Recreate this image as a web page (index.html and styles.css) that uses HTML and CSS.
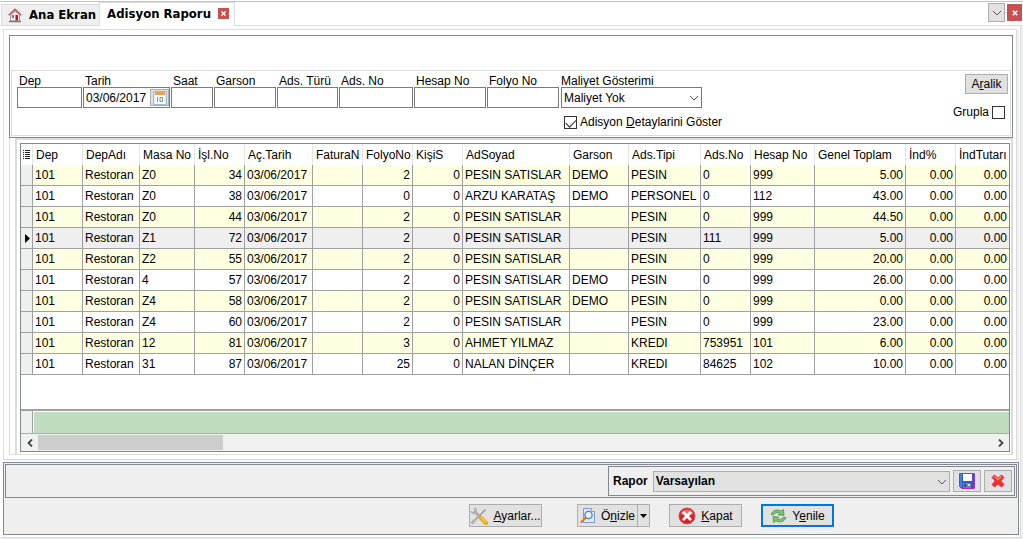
FILE: index.html
```html
<!DOCTYPE html>
<html lang="tr">
<head>
    <meta charset="UTF-8" />
    <meta name="viewport" content="width=device-width, initial-scale=1" />
    <title>Adisyon Raporu</title>
    <link rel="stylesheet" href="styles.css">
</head>
<body>
<nav class="tabs">
    <a href="#home" class="tab">
        <svg class="home-icon" width="14" height="15" viewBox="0 0 14 15">
            <path d="M2.5 7v6h9V7L7 3z" fill="#f4eeee" stroke="#a09a9a"/>
            <path d="M.8 7.2 7 1.2l6.2 6" fill="none" stroke="#c9504a" stroke-width="1.5"/>
            <rect x="4" y="7" width="2" height="3" fill="#8d6a6a"/>
            <rect x="7.500" y="7" width="2.500" height="5.500" fill="#b3131b"/>
            <path d="M1 13.500h12" stroke="#777" stroke-width="1.500"/>
        </svg>
        Ana Ekran
    </a>
    <div class="tab active">
        Adisyon Raporu
        <button class="close" type="button" aria-label="Sekmeyi kapat">
            <svg width="5" height="5" viewBox="0 0 5 5"><path d="M.5.5l4 4M4.500.5l-4 4" stroke="#fff" stroke-width="1.400"/></svg>
        </button>
    </div>
    <div class="window-buttons">
        <button class="tab-list" type="button" aria-label="Sekmeler">
            <svg width="10" height="6" viewBox="0 0 10 6"><path d="M1 1l4 4 4-4" fill="none" stroke="#555"/></svg>
        </button>
        <button class="close-all" type="button" aria-label="Kapat">
            <svg width="6" height="6" viewBox="0 0 6 6"><path d="M.8.8l4.400 4.400M5.200.8L.8 5.200" stroke="#fff" stroke-width="1.600"/></svg>
        </button>
    </div>
</nav>

<main class="workspace">
    <section class="report">
        <form class="filter">
            <div class="filter-box">
                <div class="fields">
                    <div class="field w-dep"><label for="dep">Dep</label><input type="text" id="dep"></div>
                    <div class="field w-date">
                        <label for="tarih">Tarih</label>
                        <div class="date-box">
                            <input type="text" id="tarih" value="03/06/2017">
                            <button type="button" aria-label="Takvim">
                                <svg width="14" height="14" viewBox="0 0 14 14">
                                    <rect x=".5" y=".5" width="13" height="13" fill="#dcebf8" stroke="#9dbbe0"/>
                                    <rect x="2" y="2" width="10" height="11" fill="#fff"/>
                                    <rect x="2" y="1" width="10" height="3" fill="#e8a04c"/>
                                    <path d="M4.500 6v5M7 6.500h2.500v4H7z" fill="none" stroke="#6fa56f"/>
                                </svg>
                            </button>
                        </div>
                    </div>
                    <div class="field w-time"><label for="saat">Saat</label><input type="text" id="saat"></div>
                    <div class="field w-waiter"><label for="garson">Garson</label><input type="text" id="garson"></div>
                    <div class="field w-type"><label for="tur">Ads. Türü</label><input type="text" id="tur"></div>
                    <div class="field w-no"><label for="adsno">Ads. No</label><input type="text" id="adsno"></div>
                    <div class="field w-acc"><label for="hesap">Hesap No</label><input type="text" id="hesap"></div>
                    <div class="field w-acc"><label for="folyo">Folyo No</label><input type="text" id="folyo"></div>
                    <div class="field w-cost">
                        <label for="maliyet">Maliyet Gösterimi</label>
                        <div class="select">
                            <select id="maliyet"><option>Maliyet Yok</option></select>
                            <svg width="10" height="6" viewBox="0 0 10 6"><path d="M1 1l4 4 4-4" fill="none" stroke="#555"/></svg>
                        </div>
                        <label class="check"><input type="checkbox" checked><span>Adisyon <u>D</u>etaylarini Göster</span></label>
                    </div>
                </div>
                <div class="filter-side">
                    <button type="button" class="btn range"><span>A<u>r</u>alik</span></button>
                    <label class="check">Grupla<input type="checkbox"></label>
                </div>
            </div>
        </form>

        <div class="grid-area">
            <div class="grid-frame">
                <div class="grid">
                    <div class="rows">
                        <table>
                            <colgroup>
                                <col class="c12"><col class="c50"><col class="c57"><col class="c55"><col class="c50"><col class="c68">
                                <col class="c50"><col class="c50"><col class="c50"><col class="c107"><col class="c59"><col class="c72">
                                <col class="c50"><col class="c64"><col class="c91"><col class="c50"><col>
                            </colgroup>
                            <thead>
                            <tr>
                                <th class="mark">
                                    <svg width="7" height="9" viewBox="0 0 7 9"><path d="M0 .5h1M2 .5h5M0 2.500h1M2 2.500h5M0 4.500h1M2 4.500h5M0 6.500h1M2 6.500h5M0 8.500h1M2 8.500h5" stroke="#222"/></svg>
                                </th>
                                <th>Dep</th><th>DepAdı</th><th>Masa No</th><th>İşl.No</th><th>Aç.Tarih</th><th>FaturaN</th><th>FolyoNo</th><th>KişiS</th>
                                <th>AdSoyad</th><th>Garson</th><th>Ads.Tipi</th><th>Ads.No</th><th>Hesap No</th><th>Genel Toplam</th><th>İnd%</th><th>İndTutarı</th>
                            </tr>
                            </thead>
                            <tbody>
                            <tr><td class="mark"></td><td>101</td><td>Restoran</td><td>Z0</td><td class="num">34</td><td>03/06/2017</td><td></td><td class="num">2</td><td class="num">0</td><td>PESIN SATISLAR</td><td>DEMO</td><td>PESIN</td><td>0</td><td>999</td><td class="num">5.00</td><td class="num">0.00</td><td class="num">0.00</td></tr>
                            <tr><td class="mark"></td><td>101</td><td>Restoran</td><td>Z0</td><td class="num">38</td><td>03/06/2017</td><td></td><td class="num">0</td><td class="num">0</td><td>ARZU KARATAŞ</td><td>DEMO</td><td>PERSONEL</td><td>0</td><td>112</td><td class="num">43.00</td><td class="num">0.00</td><td class="num">0.00</td></tr>
                            <tr><td class="mark"></td><td>101</td><td>Restoran</td><td>Z0</td><td class="num">44</td><td>03/06/2017</td><td></td><td class="num">2</td><td class="num">0</td><td>PESIN SATISLAR</td><td></td><td>PESIN</td><td>0</td><td>999</td><td class="num">44.50</td><td class="num">0.00</td><td class="num">0.00</td></tr>
                            <tr class="current"><td class="mark"><svg width="5" height="9" viewBox="0 0 5 9"><path d="M0 0l5 4.500L0 9z"/></svg></td><td>101</td><td>Restoran</td><td>Z1</td><td class="num">72</td><td>03/06/2017</td><td></td><td class="num">2</td><td class="num">0</td><td>PESIN SATISLAR</td><td></td><td>PESIN</td><td>111</td><td>999</td><td class="num">5.00</td><td class="num">0.00</td><td class="num">0.00</td></tr>
                            <tr><td class="mark"></td><td>101</td><td>Restoran</td><td>Z2</td><td class="num">55</td><td>03/06/2017</td><td></td><td class="num">2</td><td class="num">0</td><td>PESIN SATISLAR</td><td></td><td>PESIN</td><td>0</td><td>999</td><td class="num">20.00</td><td class="num">0.00</td><td class="num">0.00</td></tr>
                            <tr><td class="mark"></td><td>101</td><td>Restoran</td><td>4</td><td class="num">57</td><td>03/06/2017</td><td></td><td class="num">2</td><td class="num">0</td><td>PESIN SATISLAR</td><td>DEMO</td><td>PESIN</td><td>0</td><td>999</td><td class="num">26.00</td><td class="num">0.00</td><td class="num">0.00</td></tr>
                            <tr><td class="mark"></td><td>101</td><td>Restoran</td><td>Z4</td><td class="num">58</td><td>03/06/2017</td><td></td><td class="num">2</td><td class="num">0</td><td>PESIN SATISLAR</td><td>DEMO</td><td>PESIN</td><td>0</td><td>999</td><td class="num">0.00</td><td class="num">0.00</td><td class="num">0.00</td></tr>
                            <tr><td class="mark"></td><td>101</td><td>Restoran</td><td>Z4</td><td class="num">60</td><td>03/06/2017</td><td></td><td class="num">2</td><td class="num">0</td><td>PESIN SATISLAR</td><td></td><td>PESIN</td><td>0</td><td>999</td><td class="num">23.00</td><td class="num">0.00</td><td class="num">0.00</td></tr>
                            <tr><td class="mark"></td><td>101</td><td>Restoran</td><td>12</td><td class="num">81</td><td>03/06/2017</td><td></td><td class="num">3</td><td class="num">0</td><td>AHMET YILMAZ</td><td></td><td>KREDI</td><td>753951</td><td>101</td><td class="num">6.00</td><td class="num">0.00</td><td class="num">0.00</td></tr>
                            <tr><td class="mark"></td><td>101</td><td>Restoran</td><td>31</td><td class="num">87</td><td>03/06/2017</td><td></td><td class="num">25</td><td class="num">0</td><td>NALAN DİNÇER</td><td></td><td>KREDI</td><td>84625</td><td>102</td><td class="num">10.00</td><td class="num">0.00</td><td class="num">0.00</td></tr>
                            </tbody>
                        </table>
                    </div>
                    <div class="summary"><div class="summary-mark"></div><div class="summary-cells"></div></div>
                    <div class="scrollbar">
                        <button type="button" aria-label="Sola"><svg width="6" height="8" viewBox="0 0 6 8"><path d="M5 .5L1.500 4 5 7.500" fill="none" stroke="#444" stroke-width="1.800"/></svg></button>
                        <div class="track"><div class="thumb"></div></div>
                        <button type="button" aria-label="Sağa"><svg width="6" height="8" viewBox="0 0 6 8"><path d="M1 .5L4.500 4 1 7.500" fill="none" stroke="#444" stroke-width="1.800"/></svg></button>
                    </div>
                </div>
            </div>
        </div>
    </section>

    <footer class="bottom">
        <div class="template-bar">
            <div class="template">
                <label for="rapor">Rapor</label>
                <div class="select">
                    <select id="rapor"><option>Varsayılan</option></select>
                    <svg width="10" height="6" viewBox="0 0 10 6"><path d="M1 1l4 4 4-4" fill="none" stroke="#555"/></svg>
                </div>
                <button type="button" class="btn small" aria-label="Kaydet">
                    <svg width="16" height="16" viewBox="0 0 16 16">
                        <path d="M.5.5h15v15h-13l-2-2z" fill="#3559c0" stroke="#b02cc8"/>
                        <rect x="1" y="1" width="2" height="13" fill="#3b84d8"/>
                        <rect x="4" y="1" width="9" height="7" fill="#fff"/>
                        <rect x="4" y="10" width="8" height="5" fill="#6f7fa0"/>
                        <rect x="5" y="11" width="2" height="3" fill="#2a4fa8"/>
                        <rect x="9" y="11" width="2" height="2" fill="#d8d8cc"/>
                    </svg>
                </button>
                <button type="button" class="btn small" aria-label="Sil">
                    <svg width="14" height="14" viewBox="0 0 14 14">
                        <path d="M3.500 1L7 4l3.500-3L13 3.500 9.800 7l3.200 3.500-2.500 2.500L7 10l-3.500 3L1 10.500 4.200 7 1 3.500z" fill="#e83a10" stroke="#f0209c" stroke-linejoin="round"/>
                        <path d="M3.500 2.500L7 5.500l3.500-3" fill="none" stroke="#f58a5c" stroke-width="1.500"/>
                    </svg>
                </button>
            </div>
        </div>
        <div class="actions">
            <button type="button" class="btn">
                <svg width="18" height="18" viewBox="0 0 18 18">
                    <path d="M15.500 2.500L5 13" stroke="#9a9a9a" stroke-width="1.600"/>
                    <path d="M5 13l-3.500 3.500" stroke="#b0b0b0" stroke-width="3"/>
                    <path d="M4 4l6 6" stroke="#aaa" stroke-width="2.600"/>
                    <path d="M1 4.500A3 3 0 0 0 6 5M4.500 1A3 3 0 0 1 5 6" fill="none" stroke="#aaa" stroke-width="1.600"/>
                    <path d="M10.500 10.500l5.500 5.500" stroke="#e8a512" stroke-width="4" stroke-linecap="round"/>
                    <path d="M11 10.500l5 5" stroke="#ffd65a" stroke-width="1.200"/>
                </svg>
                <span><u>A</u>yarlar...</span>
            </button>
            <div class="split">
                <button type="button" class="btn">
                    <svg width="16" height="17" viewBox="0 0 16 17">
                        <path d="M3.500 1.500h8l3 3v11h-11z" fill="#dfe9fa" stroke="#7f9cd0"/>
                        <path d="M11.500 1.500v3h3" fill="#fff" stroke="#7f9cd0"/>
                        <circle cx="8.500" cy="8" r="3.600" fill="#eef7ff" stroke="#4d78b8" stroke-width="1.300"/>
                        <path d="M5.500 11l-4 4" stroke="#d87822" stroke-width="2.200" stroke-linecap="round"/>
                    </svg>
                    <span>Ö<u>n</u>izle</span>
                </button>
                <button type="button" class="btn drop" aria-label="Seçenekler">
                    <svg width="7" height="4" viewBox="0 0 7 4"><path d="M0 0h7L3.500 4z"/></svg>
                </button>
            </div>
            <button type="button" class="btn">
                <svg width="18" height="18" viewBox="0 0 18 18">
                    <circle cx="9" cy="9" r="8" fill="#dc1f26" stroke="#c8555a"/>
                    <path d="M2.500 7a7 7 0 0 1 13 0q-6 3-13 0z" fill="#ee6a6c"/>
                    <path d="M5.800 5.800l6.400 6.400M12.200 5.800l-6.400 6.400" stroke="#fff" stroke-width="2.800" stroke-linecap="round"/>
                </svg>
                <span><u>K</u>apat</span>
            </button>
            <button type="button" class="btn default">
                <svg width="17" height="16" viewBox="0 0 17 16">
                    <path d="M1 6.500C2.500 2 8 .8 11 3.200L13.500 1.500 14 7.500 8 6.800l1.800-1.500C8 4 4.500 4.500 3.500 7z" fill="#7dbd75" stroke="#4b9350" stroke-width=".8"/>
                    <path d="M16 9.500c-1.500 4.500-7 5.700-10 3.300L3.500 14.500 3 8.500l6 .7-1.800 1.500c1.800 1.300 5.300.8 6.300-1.700z" fill="#7dbd75" stroke="#4b9350" stroke-width=".8"/>
                </svg>
                <span>Y<u>e</u>nile</span>
            </button>
        </div>
    </footer>
</main>
</body>
</html>
```

FILE: styles.css
```css
* {
  box-sizing: border-box;
}
body {
  margin: 0;
  padding: 1px 0;
  min-height: 100vh;
  display: flex;
  flex-direction: column;
  background: #fff;
  color: #000;
  font-family: "Liberation Sans", Arial, sans-serif;
  font-size: 12px;
  line-height: 14px;
}
svg {
  display: block;
  flex: none;
}
button, input, select {
  font: inherit;
  color: inherit;
  margin: 0;
  padding: 0;
  border-radius: 0;
}
u {
  text-underline-offset: 1px;
}

/* tabs */
.tabs {
  display: flex;
  align-items: flex-end;
  height: 25px;
  padding-left: 1px;
  border-top: 1px solid #c4c4c4;
  box-shadow: inset 0 -1px 0 #dcdcdc;
  font-family: "DejaVu Sans Condensed", "DejaVu Sans", sans-serif;
  font-stretch: condensed;
  font-size: 13px;
  font-weight: bold;
}
.tab {
  display: flex;
  align-items: center;
  gap: 7px;
  height: 22px;
  padding: 0 3px 0 6px;
  background: #efefef;
  border: 1px solid #dcdcdc;
  border-right: none;
  color: #000;
  text-decoration: none;
  white-space: nowrap;
}
.tab.active {
  height: 24px;
  padding: 0 10px 2px 7px;
  background: #fff;
  border-right: 1px solid #dcdcdc;
  border-bottom: none;
}
.tab.active {
  padding-right: 5px;
}
.close, .close-all, .tab-list {
  display: flex;
  align-items: center;
  justify-content: center;
  background: #c75050;
  border: none;
}
.close {
  width: 11px;
  height: 11px;
}
.window-buttons {
  display: flex;
  gap: 2px;
  margin-left: auto;
  padding: 0 1px 4px 0;
}
.tab-list {
  width: 17px;
  height: 19px;
  background: #e1e1e1;
  border: 1px solid #adadad;
}
.close-all {
  width: 15px;
  height: 17px;
  margin-top: 1px;
}

.workspace {
  flex: 1;
  display: flex;
  flex-direction: column;
  margin-right: 2px;
  padding: 3px 1px 2px 3px;
  border-right: 1px solid #dcdcdc;
  border-bottom: 1px solid #dcdcdc;
  box-shadow: 2px 1px 0 #efefef;
}
.report {
  flex: 1;
  display: flex;
  flex-direction: column;
  margin: 0 2px 2px 0;
  padding: 5px 3px 4px 5px;
  border: 1px solid #dcdcdc;
  box-shadow: 2px 1px 0 #efefef;
}

/* filter */
.filter {
  padding: 34px 1px 1px;
  border: 1px solid #828790;
}
.filter-box {
  display: flex;
  justify-content: space-between;
  min-height: 66px;
  padding: 3px 2px 4px 5px;
  border: 1px solid #dcdcdc;
}
.fields {
  display: flex;
  gap: 1px;
}
.field > label {
  display: block;
  padding: 1px 0 0 2px;
  line-height: 12px;
  white-space: nowrap;
}
.field input[type="text"] {
  display: block;
  width: 100%;
  height: 21px;
  padding: 0 2px;
  border: 1px solid #7a7a7a;
  background: #fff;
}
.w-dep { width: 65px; }
.w-date { width: 87px; }
.w-time { width: 42px; }
.w-waiter { width: 62px; }
.w-type { width: 61px; }
.w-no { width: 74px; }
.w-acc { width: 72px; }
.w-cost {
  width: 141px;
  margin-left: 1px;
}
.w-cost > label {
  padding-left: 0;
}
.date-box {
  display: flex;
  border: 1px solid #7a7a7a;
}
.field .date-box input {
  flex: 1;
  min-width: 0;
  height: 19px;
  border: none;
}
.date-box button {
  display: flex;
  align-items: center;
  justify-content: center;
  width: 19px;
  height: 17px;
  margin: 1px 0 1px 1px;
  background: #e1e1e1;
  border: 1px solid #adadad;
}
.select {
  position: relative;
}
.select select {
  display: block;
  appearance: none;
  width: 100%;
  height: 21px;
  padding: 0 20px 0 2px;
  border: 1px solid #7a7a7a;
  background: #fff;
}
.select svg {
  position: absolute;
  right: 3px;
  top: 8px;
  pointer-events: none;
}
label.check {
  display: flex;
  align-items: center;
  gap: 3px;
  white-space: nowrap;
}
.field > label.check {
  margin-top: 7px;
  padding: 0 0 0 3px;
  line-height: 14px;
}
.check input {
  appearance: none;
  position: relative;
  flex: none;
  width: 13px;
  height: 13px;
  border: 1px solid #333;
  background: #fff;
}
.check input:checked::after {
  content: "";
  position: absolute;
  left: 1px;
  top: 2px;
  width: 9px;
  height: 5px;
  border-left: 1px solid #222;
  border-bottom: 1px solid #222;
  transform: rotate(-45deg);
}
.filter-side {
  display: flex;
  flex-direction: column;
  align-items: flex-end;
  gap: 11px;
}
.filter-side .check {
  margin-right: 3px;
}

.btn {
  display: flex;
  align-items: center;
  justify-content: center;
  gap: 5px;
  width: 73px;
  height: 23px;
  background: #e1e1e1;
  border: 1px solid #adadad;
  white-space: nowrap;
}
.btn.range {
  width: 43px;
  height: 20px;
}

/* grid */
.grid-area {
  flex: 1;
  display: flex;
  padding-left: 5px;
  border-left: 1px solid #dcdcdc;
  border-bottom: 1px solid #dcdcdc;
}
.grid-frame {
  flex: 1;
  min-width: 0;
  display: flex;
  padding: 3px 1px 2px 3px;
  border: 2px solid #dcdcdc;
  border-bottom: none;
}
.grid {
  flex: 1;
  min-width: 0;
  display: flex;
  flex-direction: column;
  border: 1px solid #828790;
}
.rows {
  flex: 1;
  min-height: 265px;
  overflow: hidden;
}
table {
  width: 100%;
  min-width: 987px;
  table-layout: fixed;
  border-collapse: separate;
  border-spacing: 0;
}
.c12 { width: 12px; }
.c50 { width: 50px; }
.c55 { width: 55px; }
.c57 { width: 57px; }
.c59 { width: 59px; }
.c64 { width: 64px; }
.c68 { width: 68px; }
.c72 { width: 72px; }
.c91 { width: 91px; }
.c107 { width: 107px; }
th, td {
  height: 21px;
  padding: 0 2px;
  overflow: hidden;
  white-space: nowrap;
  text-align: left;
  font-weight: normal;
  border-right: 1px solid #a0a0a0;
  border-bottom: 1px solid #a0a0a0;
}
th {
  padding: 0 0 0 3px;
  border-right-color: #e5e5e5;
  border-bottom: none;
}
th:last-child, td:last-child {
  border-right: none;
}
.num {
  text-align: right;
}
tbody tr:nth-child(odd) {
  background: #ffffe1;
}
tbody tr.current {
  background: #efefef;
}
td.mark {
  padding: 0 0 0 4px;
  background: #efefef;
}
th.mark {
  padding: 0 0 0 2px;
}
.summary {
  display: flex;
  height: 25px;
  border-top: 2px solid #a0a0a0;
  border-bottom: 1px solid #adadad;
}
.summary-mark {
  width: 12px;
  background: #efefef;
  border-right: 1px solid #a0a0a0;
}
.summary-cells {
  flex: 1;
  background: #c0dcc0;
  border-top: 1px solid #fff;
  border-left: 1px solid #fff;
}
.scrollbar {
  display: flex;
  height: 17px;
  background: #f0f0f0;
}
.scrollbar button {
  display: flex;
  align-items: center;
  justify-content: center;
  width: 17px;
  border: none;
  background: #f0f0f0;
}
.track {
  flex: 1;
  padding: 1px 0;
}
.thumb {
  width: 185px;
  height: 15px;
  background: #cdcdcd;
}

/* bottom panel */
.bottom {
  padding: 1px;
  background: #efefef;
  border: 1px solid #828790;
}
.template-bar {
  display: flex;
  justify-content: flex-end;
  padding: 1px;
  border: 1px solid #828790;
}
.template {
  display: flex;
  align-items: center;
  gap: 3px;
  width: 407px;
  height: 30px;
  padding: 0 2px 0 4px;
  border: 1px solid #828790;
  font-weight: bold;
}
.template .select {
  flex: 1;
  margin-left: 2px;
}
.template select {
  background: #e1e1e1;
  border-color: #adadad;
}
.btn.small {
  width: 28px;
  height: 22px;
}
.actions {
  display: flex;
  justify-content: flex-end;
  gap: 19px;
  padding: 6px 183px 6px 0;
}
.actions .split {
  display: flex;
  margin-left: 16px;
}
.split .btn {
  width: 61px;
}
.split .btn.drop {
  width: 13px;
  margin-left: -1px;
}
.btn.default {
  border: 2px solid #0078d7;
}
```
